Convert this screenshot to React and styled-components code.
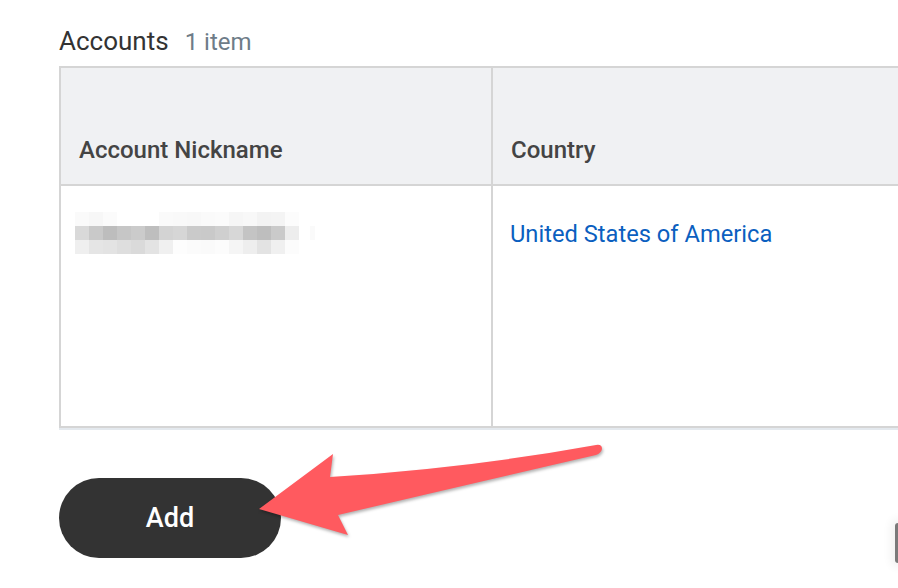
import React from "react";
import styled, { createGlobalStyle } from "styled-components";

const Global = createGlobalStyle`
  html, body { margin: 0; padding: 0; background: #fff; overflow: hidden; }
  body { font-family: Roboto, "Liberation Sans", Arial, sans-serif; }
`;

const Page = styled.div`
  position: relative;
  width: 898px;
  height: 588px;
  overflow: hidden;
  padding: 26px 0 0 59px;
  box-sizing: border-box;
`;

const TitleRow = styled.div`
  display: flex;
  align-items: baseline;
  gap: 16px;
  height: 40px;
`;

const Title = styled.h2`
  margin: 0;
  font-size: 26px;
  font-weight: 400;
  color: #333;
  line-height: 30px;
`;

const Count = styled.span`
  font-size: 24px;
  color: #6e7c88;
`;

const Table = styled.div`
  display: grid;
  grid-template-columns: 432px 600px;
  width: 1034px;
  border-top: 2px solid #d5d5d5;
  border-left: 2px solid #d5d5d5;
  border-bottom: 2px solid #d5d5d5;
  box-shadow: 0 2px 0 #e4e9ee;
`;

const HeaderCell = styled.div`
  height: 118px;
  background: #f0f1f3;
  border-bottom: 2px solid #d5d5d5;
  border-right: ${(p) => (p.$divider ? "2px solid #d5d5d5" : "none")};
  display: flex;
  align-items: flex-end;
  padding: 0 0 20px 18px;
  box-sizing: border-box;
  font-size: 24px;
  font-weight: 500;
  color: #444;
  line-height: 28px;
`;

const BodyCell = styled.div`
  height: 240px;
  border-right: ${(p) => (p.$divider ? "2px solid #d5d5d5" : "none")};
  padding: 34px 0 0 17px;
  box-sizing: border-box;
`;

const Link = styled.a`
  font-size: 23.7px;
  color: #0b5fc0;
  text-decoration: none;
  line-height: 28px;
`;

const Redacted = styled.svg`
  display: block;
  margin: -8px 0 0 -3px;
`;

const AddButton = styled.button`
  margin-top: 50px;
  width: 222px;
  height: 80px;
  border: none;
  border-radius: 40px;
  background: #333333;
  color: #fff;
  font-family: Roboto, "Liberation Sans", Arial, sans-serif;
  font-size: 27px;
  font-weight: 500;
  cursor: pointer;
`;

const Overlay = styled.svg`
  position: absolute;
  left: 0;
  top: 0;
  pointer-events: none;
  filter: drop-shadow(1px 2px 1.5px rgba(0, 0, 0, 0.3));
`;

const EdgeWidget = styled.div`
  position: absolute;
  left: 895px;
  top: 523px;
  width: 12px;
  height: 40px;
  border-radius: 3px;
  background: #7a7a7a;
  box-shadow: 0 0 10px 4px rgba(0, 0, 0, 0.06);
`;

const row1 = ["#fafafa", "#f7f7f7", "#fbfbfb", "#fff", "#fff", "#fff", "#fafafa", "#f9f9f9", "#f8f8f8", "#fafafa", "#fbfbfb", "#f6f6f6", "#f8f8f8", "#f3f3f3", "#f4f4f4", "#fcfcfc"];
const row2 = ["#d9d9d9", "#c9c9c9", "#bdbdbd", "#c6c6c6", "#cbcbcb", "#bebebe", "#d3d3d3", "#d6d6d6", "#cacaca", "#c9c9c9", "#cfcfcf", "#d7d7d7", "#c4c4c4", "#bebebe", "#cacaca", "#ededed"];
const row3 = ["#efefef", "#e5e5e5", "#e3e3e3", "#dedede", "#dadada", "#e3e3e3", "#f0f0f0", "#fdfdfd", "#fbfbfb", "#fafafa", "#fcfcfc", "#f5f5f5", "#eeeeee", "#e3e3e3", "#f0f0f0", "#fcfcfc"];

function Pixelated() {
  const rows = [row1, row2, row3];
  return (
    <Redacted width="240" height="42" viewBox="0 0 240 42">
      {rows.map((r, ri) =>
        r.map((c, ci) => (
          <rect key={ri + "-" + ci} x={ci * 14} y={ri * 14} width="14" height="14" fill={c} />
        ))
      )}
      <rect x="235" y="14" width="5" height="14" fill="#fafafa" />
    </Redacted>
  );
}

export default function App() {
  return (
    <>
      <Global />
      <Page>
        <TitleRow>
          <Title>Accounts</Title>
          <Count>1 item</Count>
        </TitleRow>
        <Table>
          <HeaderCell $divider>Account Nickname</HeaderCell>
          <HeaderCell>Country</HeaderCell>
          <BodyCell $divider>
            <Pixelated />
          </BodyCell>
          <BodyCell>
            <Link href="#">United States of America</Link>
          </BodyCell>
        </Table>
        <AddButton>Add</AddButton>
        <EdgeWidget />
        <Overlay width="898" height="588" viewBox="0 0 898 588">
          <path
            d="M 259 509 L 333 454 L 330 477 Q 470 468 596 445 Q 602 444 602 449 Q 601 453 596 455 Q 470 484 338 515 L 348 535 Z"
            fill="#ff5a5f"
          />
        </Overlay>
      </Page>
    </>
  );
}
